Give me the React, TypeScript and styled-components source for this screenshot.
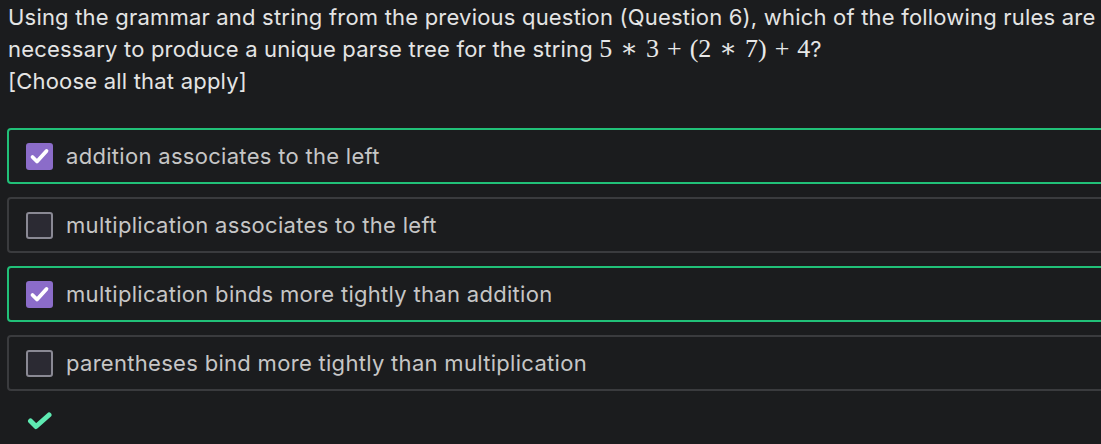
import React from 'react';
import styled, { createGlobalStyle } from 'styled-components';

const GlobalStyle = createGlobalStyle`
  html, body {
    margin: 0;
    padding: 0;
    background: #1b1c1e;
    overflow: hidden;
  }
  body {
    font-family: Inter, "Noto Sans", sans-serif;
  }
`;

const Page = styled.div`
  width: 1140px;
  padding: 1px 0 0 8px;
`;

const Question = styled.div`
  color: #e4e4e4;
  font-size: 22px;
  letter-spacing: 0.2px;
  line-height: 32px;
  white-space: nowrap;
`;

const Math = styled.span`
  font-family: "Liberation Serif", "DejaVu Serif", serif;
  font-size: 26px;
  letter-spacing: 0;
  color: #e8e8e8;
`;

const Op = styled.span`
  margin: 0 8px;
`;

const Options = styled.div`
  margin-top: 31px;
  display: flex;
  flex-direction: column;
  gap: 13px;
`;

const Option = styled.label<{ $checked: boolean }>`
  display: flex;
  align-items: center;
  gap: 13px;
  height: 56px;
  box-sizing: border-box;
  padding-left: 17px;
  margin-left: -1px;
  border: 2px solid ${({ $checked }) => ($checked ? '#21c078' : '#3a3b3e')};
  border-radius: 4px;
  color: #c6c6c6;
  font-size: 22px;
  letter-spacing: 0.3px;
`;

const Box = styled.span<{ $checked: boolean }>`
  width: 27px;
  height: 27px;
  flex-shrink: 0;
  box-sizing: border-box;
  border-radius: 3px;
  display: flex;
  align-items: center;
  justify-content: center;
  background: ${({ $checked }) => ($checked ? '#8b6cc9' : '#2b2a33')};
  border: ${({ $checked }) => ($checked ? 'none' : '2px solid #8a8994')};
`;

const Result = styled.div`
  padding: 20px 0 0 19px;
`;

const options = [
  { text: 'addition associates to the left', checked: true },
  { text: 'multiplication associates to the left', checked: false },
  { text: 'multiplication binds more tightly than addition', checked: true },
  { text: 'parentheses bind more tightly than multiplication', checked: false },
];

const Tick = () => (
  <svg width="21" height="21" viewBox="0 0 21 21">
    <polyline
      points="3.5,11 8,15.5 17.5,5"
      fill="none"
      stroke="#ffffff"
      strokeWidth="3.8"
      strokeLinecap="round"
      strokeLinejoin="round"
    />
  </svg>
);

export default function App() {
  return (
    <Page>
      <GlobalStyle />
      <Question>
        Using the grammar and string from the previous question (Question 6), which of the following rules are
        <br />
        necessary to produce a unique parse tree for the string{' '}
        <Math>
          5<Op>∗</Op>3<Op>+</Op>(2<Op>∗</Op>7)<Op>+</Op>4
        </Math>
        ?
        <br />
        [Choose all that apply]
      </Question>
      <Options>
        {options.map((o) => (
          <Option key={o.text} $checked={o.checked}>
            <Box $checked={o.checked}>{o.checked && <Tick />}</Box>
            {o.text}
          </Option>
        ))}
      </Options>
      <Result>
        <svg width="26" height="20" viewBox="0 0 26 20">
          <polyline
            points="3.5,10 9,15.5 22,4"
            fill="none"
            stroke="#5eeab2"
            strokeWidth="5"
            strokeLinecap="round"
            strokeLinejoin="round"
          />
        </svg>
      </Result>
    </Page>
  );
}
